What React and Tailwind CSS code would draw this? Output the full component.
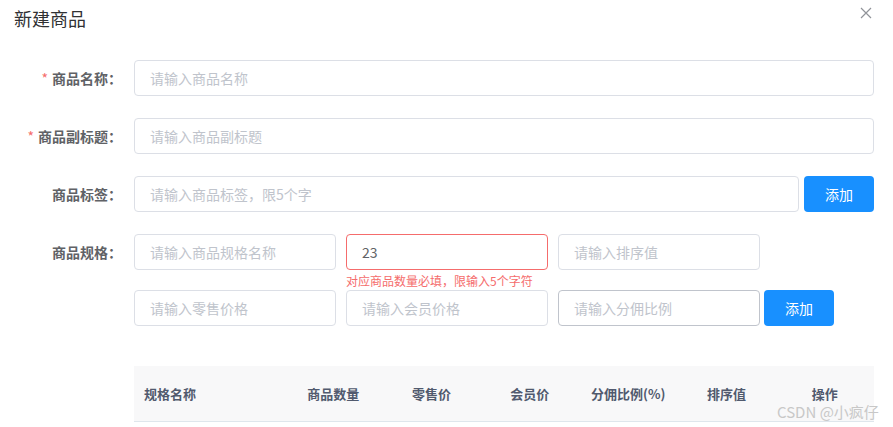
import React from "react";

const Input = ({ placeholder, value, className = "", error, hover }) => (
  <div
    className={`h-[36px] rounded-[4px] border px-[15px] flex items-center text-[14px] ${
      error ? "border-[#f56c6c]" : hover ? "border-[#c0c4cc]" : "border-[#dcdfe6]"
    } ${className}`}
  >
    {value ? (
      <span className="text-[#606266]">{value}</span>
    ) : (
      <span className="text-[#c0c4cc]">{placeholder}</span>
    )}
  </div>
);

const Label = ({ children, required }) => (
  <div className="w-[134px] shrink-0 pr-[12px] h-[36px] flex items-center justify-end text-[14px] font-bold text-[#606266]">
    {required && <span className="text-[#f56c6c] mr-[4px] font-normal">*</span>}
    {children}
  </div>
);

const Button = ({ children }) => (
  <div className="w-[70px] h-[36px] shrink-0 rounded-[4px] bg-[#1890ff] text-white text-[14px] flex items-center justify-center">
    {children}
  </div>
);

const cols = ["商品数量", "零售价", "会员价", "分佣比例(%)", "排序值", "操作"];

export default function App() {
  return (
    <div
      className="relative w-[893px] h-[427px] bg-white overflow-hidden"
      style={{ fontFamily: '"Noto Sans CJK SC", "Noto Sans", sans-serif' }}
    >
      <div className="h-[36px] pt-[6px] px-[14px] text-[18px] leading-[24px] text-[#303133]">新建商品</div>
      <svg className="absolute left-[860px] top-[7px]" width="12" height="12" viewBox="0 0 12 12">
        <path d="M1 1L11 11M11 1L1 11" stroke="#909399" strokeWidth="1.2" />
      </svg>

      <div className="mt-[24px] pr-[19px] flex flex-col">
        <div className="flex mb-[22px]">
          <Label required>商品名称：</Label>
          <Input className="flex-1" placeholder="请输入商品名称" />
        </div>
        <div className="flex mb-[22px]">
          <Label required>商品副标题：</Label>
          <Input className="flex-1" placeholder="请输入商品副标题" />
        </div>
        <div className="flex mb-[22px]">
          <Label>商品标签：</Label>
          <div className="flex-1 flex gap-[5px]">
            <Input className="flex-1" placeholder="请输入商品标签，限5个字" />
            <Button>添加</Button>
          </div>
        </div>
        <div className="flex mb-[20px]">
          <Label>商品规格：</Label>
          <div className="flex gap-[10px]">
            <Input className="w-[202px]" placeholder="请输入商品规格名称" />
            <div className="relative">
              <Input className="w-[202px]" value="23" error />
              <div className="absolute left-0 top-full pt-[4px] text-[12px] leading-[14px] text-[#f56c6c] whitespace-nowrap">
                对应商品数量必填，限输入5个字符
              </div>
            </div>
            <Input className="w-[202px]" placeholder="请输入排序值" />
          </div>
        </div>
        <div className="flex">
          <div className="w-[134px] shrink-0" />
          <div className="flex gap-[10px]">
            <Input className="w-[202px]" placeholder="请输入零售价格" />
            <Input className="w-[202px]" placeholder="请输入会员价格" />
            <div className="flex gap-[4px]">
              <Input className="w-[202px]" placeholder="请输入分佣比例" hover />
              <Button>添加</Button>
            </div>
          </div>
        </div>

        <div className="ml-[134px] mt-[40px] h-[56px] bg-[#f8f8f9] border-b border-[#dfe6ec] flex items-center text-[13px] font-bold text-[#515a6e]">
          <div className="w-[150px] pl-[10px]">规格名称</div>
          {cols.map((c) => (
            <div key={c} className="flex-1 text-center">
              {c}
            </div>
          ))}
        </div>
      </div>

      <div className="absolute left-[777px] top-[402px] text-[15px] leading-[20px] text-[#c8c8c8] whitespace-nowrap">
        CSDN @小疯仔
      </div>
    </div>
  );
}
